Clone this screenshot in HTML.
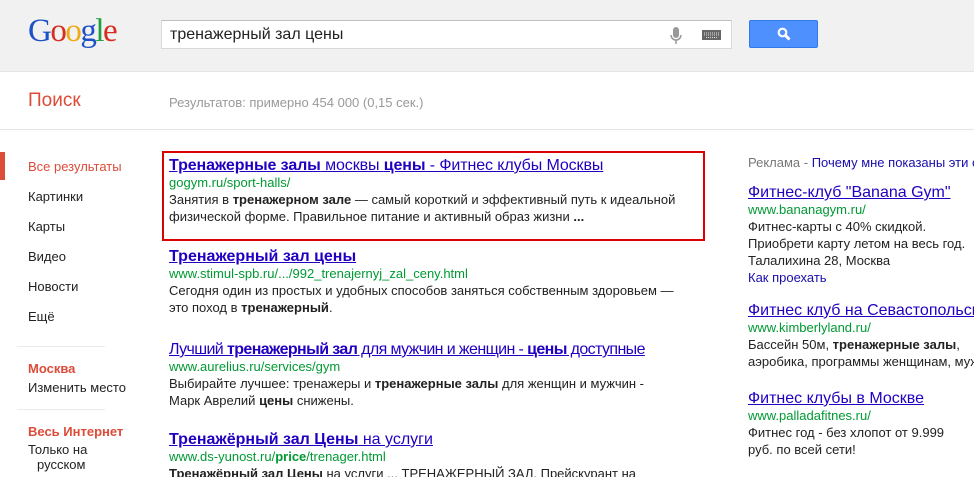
<!DOCTYPE html>
<html><head><meta charset="utf-8"><style>
html,body{margin:0;width:974px;height:477px;overflow:hidden}
body{background:#fff;font-family:"Liberation Sans",Arial,sans-serif;font-size:13px;color:#222;position:relative}
#wrap{position:absolute;left:0;top:0;width:974px;height:477px;overflow:hidden}
.a{position:absolute;white-space:nowrap}
#hd{position:absolute;left:0;top:0;width:974px;height:71px;background:#f1f1f1;border-bottom:1px solid #e5e5e5}
#sb{position:absolute;left:161px;top:20px;width:569px;height:27px;background:#fff;border:1px solid #d9d9d9;border-top-color:#c0c0c0}
#btn{position:absolute;left:749px;top:20px;width:69px;height:28px;background:#4d90fe;border-radius:2px;border:1px solid #3079ed;box-sizing:border-box}
.logo{position:absolute;left:28px;top:13px;font-family:"Liberation Serif",serif;font-size:33px;letter-spacing:-1.5px}
.t{font-size:16px;text-decoration:underline;color:#2200c1}
.u{color:#009933}
.l{line-height:17px}
.nav{position:absolute;left:28px;color:#222}
.hr{position:absolute;height:1px;background:#ebebeb}
</style></head><body><div id="wrap">
<div id="hd"></div>
<div class="logo"><span style="color:#1d52c6">G</span><span style="color:#d62d20">o</span><span style="color:#efaa14">o</span><span style="color:#1d52c6">g</span><span style="color:#20a03c">l</span><span style="color:#d62d20">e</span></div>
<div id="sb"><span class="a" style="left:8px;top:5px;font-size:16px;color:#222">тренажерный зал цены</span>
<svg class="a" style="left:507px;top:6px" width="14" height="18"><rect x="4" y="0" width="6" height="11" rx="3" fill="#999"/><path d="M2 8a5 5 0 0 0 10 0M7 13v4" stroke="#999" stroke-width="1.5" fill="none"/></svg>
<svg class="a" style="left:540px;top:9px" width="19" height="10"><rect width="19" height="10" fill="#666"/><path d="M2 3h15M2 5h15M4 7.5h11" stroke="#ddd" stroke-width="1" stroke-dasharray="1 1"/></svg>
</div>
<div id="btn"><svg class="a" style="left:27px;top:6px" width="14" height="14"><circle cx="5.5" cy="5.5" r="3.8" stroke="#fff" stroke-width="2.2" fill="none"/><path d="M8.3 8.3L12.5 12.5" stroke="#fff" stroke-width="3"/></svg></div>
<div class="a" style="left:28px;top:90px;font-size:19px;color:#dd4b39">Поиск</div>
<div class="a" style="left:169px;top:95px;color:#999">Результатов: примерно 454 000 (0,15 сек.)</div>
<div class="hr" style="left:0;top:129px;width:974px;background:#e5e5e5"></div>
<div class="a" style="left:0;top:152px;width:5px;height:28px;background:#dd4b39"></div>
<div class="nav a" style="top:159px;color:#dd4b39">Все результаты</div>
<div class="nav a" style="top:189px">Картинки</div>
<div class="nav a" style="top:219px">Карты</div>
<div class="nav a" style="top:249px">Видео</div>
<div class="nav a" style="top:279px">Новости</div>
<div class="nav a" style="top:309px">Ещё</div>
<div class="hr" style="left:17px;top:346px;width:88px"></div>
<div class="nav a" style="top:361px;color:#dd4b39;font-weight:bold">Москва</div>
<div class="nav a" style="top:380px">Изменить место</div>
<div class="hr" style="left:17px;top:409px;width:88px"></div>
<div class="nav a" style="top:424px;color:#dd4b39;font-weight:bold">Весь Интернет</div>
<div class="nav a" style="top:442px">Только на</div>
<div class="nav a" style="top:457px;left:37px">русском</div>

<div class="a" style="left:162px;top:151px;width:539px;height:86px;border:2px solid #d00"></div>
<div class="a l" style="left:169px;top:157px"><span class="t" style="letter-spacing:-0.1px"><b>Тренажерные залы</b> москвы <b>цены</b> - Фитнес клубы Москвы</span><br><span class="u">gogym.ru/sport-halls/</span><br>Занятия в <b>тренажерном зале</b> — самый короткий и эффективный путь к идеальной<br>физической форме. Правильное питание и активный образ жизни <b>...</b></div>
<div class="a l" style="left:169px;top:248px"><span class="t"><b>Тренажерный зал цены</b></span><br><span class="u">www.stimul-spb.ru/.../992_trenajernyj_zal_ceny.html</span><br>Сегодня один из простых и удобных способов заняться собственным здоровьем —<br>это поход в <b>тренажерный</b>.</div>
<div class="a l" style="left:169px;top:341px"><span class="t" style="letter-spacing:-0.6px">Лучший <b>тренажерный зал</b> для мужчин и женщин - <b>цены</b> доступные</span><br><span class="u">www.aurelius.ru/services/gym</span><br>Выбирайте лучшее: тренажеры и <b>тренажерные залы</b> для женщин и мужчин -<br>Марк Аврелий <b>цены</b> снижены.</div>
<div class="a l" style="left:169px;top:431px"><span class="t"><b>Тренажёрный зал Цены</b> на услуги</span><br><span class="u">www.ds-yunost.ru/<b>price</b>/trenager.html</span><br><b>Тренажёрный зал Цены</b> на услуги ... ТРЕНАЖЕРНЫЙ ЗАЛ. Прейскурант на</div>

<div class="a" style="left:748px;top:155px;color:#777">Реклама - <span style="color:#1a0dab">Почему мне показаны эти объявления?</span></div>
<div class="a l" style="left:748px;top:184px"><span class="t">Фитнес-клуб "Banana Gym"</span><br><span class="u">www.bananagym.ru/</span><br>Фитнес-карты с 40% скидкой.<br>Приобрети карту летом на весь год.<br>Талалихина 28, Москва<br><span style="color:#1a0dab">Как проехать</span></div>
<div class="a l" style="left:748px;top:302px"><span class="t">Фитнес клуб на Севастопольском</span><br><span class="u">www.kimberlyland.ru/</span><br>Бассейн 50м, <b>тренажерные залы</b>,<br>аэробика, программы женщинам, мужчинам</div>
<div class="a l" style="left:748px;top:390px"><span class="t">Фитнес клубы в Москве</span><br><span class="u">www.palladafitnes.ru/</span><br>Фитнес год - без хлопот от 9.999<br>руб. по всей сети!</div>
</div></body></html>
